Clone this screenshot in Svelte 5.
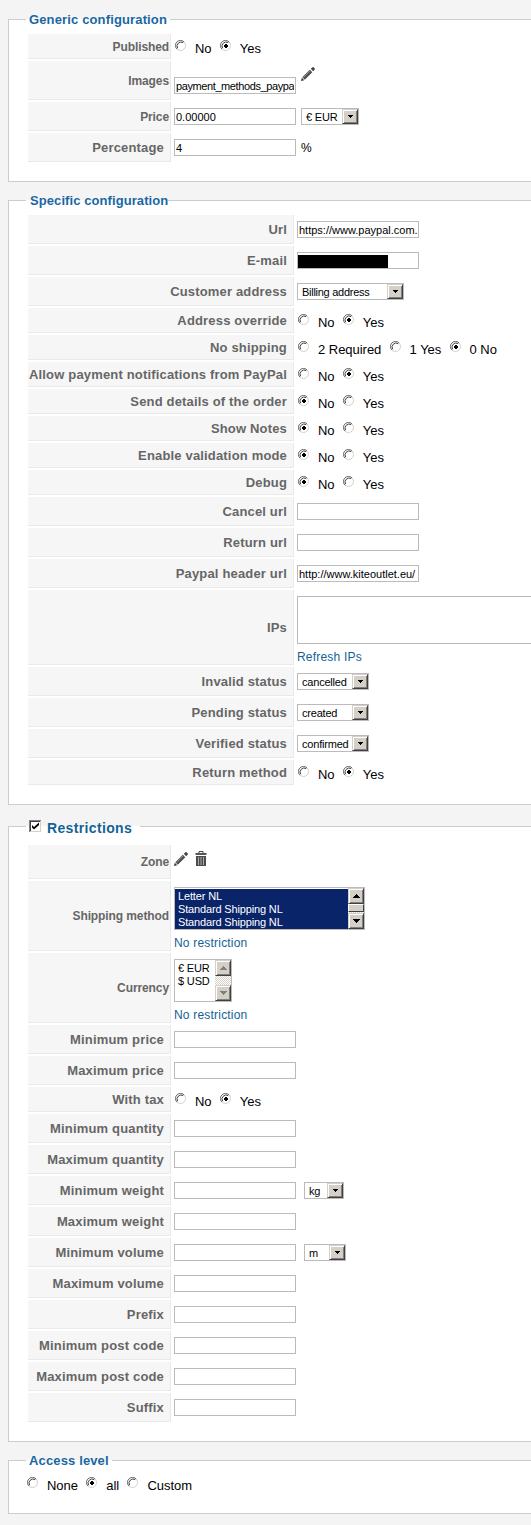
<script lang="ts">
  type Row = {
    label: string;
    kind?: 'text' | 'radio' | 'choice' | 'images' | 'ips' | 'zone' | 'shipping' | 'currency';
    value?: string;
    options?: string[];
    suffix?: string;
    unit?: string;
    unitSize?: string;
    size?: string;
    small?: boolean;
    masked?: boolean;
  };

  const yesNo = ['No', 'Yes'];

  const generic: Row[] = [
    { label: 'Published', kind: 'radio', options: yesNo, value: 'Yes', small: true },
    { label: 'Images', kind: 'images', value: 'payment_methods_paypal', small: true },
    { label: 'Price', value: '0.00000', unit: '€ EUR', unitSize: 'eur', small: true },
    { label: 'Percentage', value: '4', suffix: '%' },
  ];

  const specific: Row[] = [
    { label: 'Url', value: 'https://www.paypal.com.' },
    { label: 'E-mail', masked: true },
    { label: 'Customer address', kind: 'choice', value: 'Billing address', size: 'address' },
    { label: 'Address override', kind: 'radio', options: yesNo, value: 'Yes' },
    { label: 'No shipping', kind: 'radio', options: ['2 Required', '1 Yes', '0 No'], value: '0 No' },
    { label: 'Allow payment notifications from PayPal', kind: 'radio', options: yesNo, value: 'Yes' },
    { label: 'Send details of the order', kind: 'radio', options: yesNo, value: 'No' },
    { label: 'Show Notes', kind: 'radio', options: yesNo, value: 'No' },
    { label: 'Enable validation mode', kind: 'radio', options: yesNo, value: 'No' },
    { label: 'Debug', kind: 'radio', options: yesNo, value: 'No' },
    { label: 'Cancel url' },
    { label: 'Return url' },
    { label: 'Paypal header url', value: 'http://www.kiteoutlet.eu/' },
    { label: 'IPs', kind: 'ips' },
    { label: 'Invalid status', kind: 'choice', value: 'cancelled', size: 'status' },
    { label: 'Pending status', kind: 'choice', value: 'created', size: 'status' },
    { label: 'Verified status', kind: 'choice', value: 'confirmed', size: 'status' },
    { label: 'Return method', kind: 'radio', options: yesNo, value: 'Yes' },
  ];

  const restrictions: Row[] = [
    { label: 'Zone', kind: 'zone', small: true },
    { label: 'Shipping method', kind: 'shipping', small: true },
    { label: 'Currency', kind: 'currency', small: true },
    { label: 'Minimum price' },
    { label: 'Maximum price' },
    { label: 'With tax', kind: 'radio', options: yesNo, value: 'Yes' },
    { label: 'Minimum quantity' },
    { label: 'Maximum quantity' },
    { label: 'Minimum weight', unit: 'kg', unitSize: 'kg' },
    { label: 'Maximum weight' },
    { label: 'Minimum volume', unit: 'm', unitSize: 'm' },
    { label: 'Maximum volume' },
    { label: 'Prefix' },
    { label: 'Minimum post code' },
    { label: 'Maximum post code' },
    { label: 'Suffix' },
  ];
</script>

{#snippet radios(options: string[], value: string)}
  <div class="radios">
    {#each options as option}
      <span class="option">
        <svg width="12" height="12" viewBox="0 0 12 12">
          <circle cx="5.5" cy="5.5" r="5" fill="#fff" stroke="#d4d0c8" />
          <path d="M1.9 9.1A5 5 0 0 1 9.1 1.9" fill="none" stroke="#707070" />
          <path d="M2.6 8.2A4.1 4.1 0 0 1 8.2 2.6" fill="none" stroke="#404040" />
          {#if option === value}<path d="M5 4h2v1h1v2H7v1H5V7H4V5h1z" fill="#000" />{/if}
        </svg>
        <span>{option}</span>
      </span>
    {/each}
  </div>
{/snippet}

{#snippet dropdown(value: string, size: string)}
  <span class="select {size}">
    <span class="value">{value}</span>
    <span class="btn"><svg width="5" height="3" viewBox="0 0 5 3"><path d="M0 0h5v1H4v1H3v1H2V2H1V1H0z" /></svg></span>
  </span>
{/snippet}

{#snippet pencil()}
  <svg class="pencil" width="14" height="14" viewBox="0 0 14 14">
    <path d="M0 14l.8-3.2 2.4 2.4z" fill="#333" />
    <path d="M1.3 10.2L8.8 2.7l2.5 2.5-7.5 7.5z" fill="#505050" />
    <path d="M2.6 10.4L9.6 3.4" stroke="#8c8c8c" />
    <path d="M9.8 1.8L11.4.3h1.3l1 1v1.3l-1.5 1.6z" fill="#444" />
  </svg>
{/snippet}

{#snippet scrollbar(thumb: boolean)}
  <span class="scrollbar" class:disabled={!thumb}>
    <span class="btn"><svg width="7" height="4" viewBox="0 0 7 4"><path d="M3 0h1v1h1v1h1v1h1v1H0V3h1V2h1V1h1z" /></svg></span>
    <span class="track">{#if thumb}<span class="thumb"></span>{/if}</span>
    <span class="btn"><svg width="7" height="4" viewBox="0 0 7 4"><path d="M0 0h7v1H6v1H5v1H4v1H3V3H2V2H1V1H0z" /></svg></span>
  </span>
{/snippet}

{#snippet table(rows: Row[])}
  {#each rows as row}
    {@const kind = row.kind ?? 'text'}
    <div class="row {kind}">
      <div class="key" class:small={row.small}>{row.label}</div>
      <div class="cell">
        {#if kind === 'radio'}
          {@render radios(row.options ?? [], row.value ?? '')}
        {:else if kind === 'choice'}
          {@render dropdown(row.value ?? '', row.size ?? '')}
        {:else if kind === 'images'}
          <input type="text" value={row.value} />
          {@render pencil()}
        {:else if kind === 'ips'}
          <textarea></textarea>
          <a href="#ips">Refresh IPs</a>
        {:else if kind === 'zone'}
          {@render pencil()}
          <svg class="trash" width="12" height="15" viewBox="0 0 12 15">
            <path d="M4 2V.5h4V2" fill="none" stroke="#444" />
            <path d="M.5 2h11v2H.5z" fill="#555" />
            <path d="M1 5h10v10H1z" fill="#4c4c4c" />
            <path d="M3.5 6v8M6 6v8M8.5 6v8" stroke="#aaa" />
          </svg>
        {:else if kind === 'shipping'}
          <div class="list wide">
            <div class="options">
              <div>Letter NL</div>
              <div>Standard Shipping NL</div>
              <div>Standard Shipping NL</div>
            </div>
            {@render scrollbar(true)}
          </div>
          <a href="#shipping">No restriction</a>
        {:else if kind === 'currency'}
          <div class="list">
            <div class="options">
              <div>€ EUR</div>
              <div>$ USD</div>
            </div>
            {@render scrollbar(false)}
          </div>
          <a href="#currency">No restriction</a>
        {:else if row.masked}
          <div class="masked"><span></span></div>
        {:else}
          <input type="text" value={row.value ?? ''} />
          {#if row.unit}{@render dropdown(row.unit, row.unitSize ?? '')}{/if}
          {#if row.suffix}<span class="suffix">{row.suffix}</span>{/if}
        {/if}
      </div>
    </div>
  {/each}
{/snippet}

<div class="page">
  <fieldset>
    <legend>Generic configuration</legend>
    {@render table(generic)}
  </fieldset>

  <fieldset class="specific">
    <legend>Specific configuration</legend>
    {@render table(specific)}
  </fieldset>

  <fieldset class="restrictions">
    <legend>
      <svg width="12" height="12" viewBox="0 0 12 12">
        <path d="M0 0h12v12H0z" fill="#d4d0c8" />
        <path d="M0 0h12v1H1v11H0z" fill="#808080" />
        <path d="M1 1h10v1H2v9H1z" fill="#404040" />
        <path d="M2 2h9v9H2z" fill="#fff" />
        <path d="M3 5v2.5L5 9.5 10 5V2.5L5 7z" fill="#000" />
      </svg>
      <span>Restrictions</span>
    </legend>
    {@render table(restrictions)}
  </fieldset>

  <fieldset class="access">
    <legend>Access level</legend>
    {@render radios(['None', 'all', 'Custom'], 'all')}
  </fieldset>
</div>

<style>
  :global(body) { background: #f4f4f4; }
  .page { display: flex; flex-direction: column; gap: 10px; height: 1525px; padding: 11px 0 0 8px; box-sizing: border-box; overflow: hidden; font-family: "Liberation Sans", Arial, sans-serif; font-size: 13px; color: #000; }
  fieldset { width: 560px; box-sizing: border-box; margin: 0; border: 1px solid #ccc; padding: 6px 19px 17px; background: #fff; }
  legend { height: 17px; line-height: 17px; box-sizing: border-box; margin-left: -2px; padding: 0 3px; font-weight: bold; letter-spacing: .14px; color: #1a67a3; white-space: nowrap; }
  .specific legend { padding: 0 0 0 4px; letter-spacing: .08px; }
  .restrictions { padding-top: 7px; }
  .restrictions legend { display: flex; height: 23px; line-height: 26px; width: 114px; font-size: 14px; letter-spacing: .35px; color: #146295; }
  .restrictions legend svg { margin: 5px 6px 0 0; }

  .row { display: flex; height: 29px; margin-bottom: 2px; }
  .row.radio { height: 25px; }
  .row.images { height: 39px; }
  .row.ips { height: 75px; }
  .row.zone { height: 34px; }
  .row.shipping, .row.currency { height: 70px; }
  .key { display: flex; align-items: center; justify-content: flex-end; flex: none; width: 143px; box-sizing: border-box; padding-right: 6px; background: #f6f6f6; border-right: 1px solid #e9e9e9; border-bottom: 1px solid #e9e9e9; color: #666; font-weight: bold; letter-spacing: .17px; white-space: nowrap; }
  .key.small { padding: 1px 1px 0 0; font-size: 12px; letter-spacing: -.1px; }
  .specific .key { width: 266px; }
  .cell { display: flex; align-items: center; padding-left: 3px; }

  input, textarea, .masked, .select, .list { box-sizing: border-box; border: 1px solid #bbb; background: #fff; color: #000; font: 11px "Liberation Sans", Arial, sans-serif; border-radius: 0; letter-spacing: -.15px; }
  input { width: 122px; height: 17px; margin: 0; padding: 1px 1px 0; letter-spacing: 0; }
  .images input { letter-spacing: -.4px; }
  textarea { display: block; width: 300px; height: 48px; margin: 6px 0 0; resize: none; }
  .masked { width: 122px; height: 17px; padding-top: 2px; }
  .masked span { display: block; width: 90px; height: 13px; background: #000; }
  .suffix { margin-left: 5px; font-size: 12px; }

  .radios { display: flex; gap: 8.3px; padding-left: 1px; }
  .option { display: flex; align-items: center; gap: 8px; letter-spacing: -.03px; }
  .option svg { margin-top: -3px; }
  .option span { line-height: 15px; padding-top: 2px; }
  .row .option svg { margin-top: -2px; }
  .row .option span { padding-top: 4px; }

  .select { display: inline-flex; height: 17px; }
  .select .value { flex: 1; padding-left: 4px; line-height: 16px; white-space: nowrap; }
  .btn { display: flex; align-items: center; justify-content: center; flex: none; width: 16px; height: 15px; box-sizing: border-box; background: #d4d0c8; border: 1px solid; border-color: #d4d0c8 #404040 #404040 #d4d0c8; box-shadow: inset 1px 1px #fff, inset -1px -1px #808080; }
  .select.address { width: 107px; letter-spacing: -.27px; }
  .select.status { width: 72px; letter-spacing: -.2px; }
  .select.eur { width: 58px; margin-left: 5px; }
  .select.kg { width: 40px; margin-left: 8px; }
  .select.m { width: 42px; margin-left: 8px; }

  .row.images .cell { align-items: flex-start; padding-top: 6px; }
  .row.images input { margin-top: 10px; }
  .row.images .pencil { margin-left: 5px; }
  .row.zone .cell { align-items: flex-start; gap: 7px; padding: 6px 0 0 3px; }
  .row.zone .pencil { margin-top: 1px; }

  .ips .cell, .shipping .cell, .currency .cell { display: block; }
  .list { display: flex; width: 58px; height: 43px; margin-top: 6px; }
  .list.wide { width: 191px; }
  .options { flex: 1; padding-top: 2px; line-height: 13px; }
  .options div { padding-left: 3px; white-space: nowrap; }
  .wide .options { margin-top: 1px; padding-top: 1px; background: #0a246a; color: #fff; }
  .scrollbar { display: flex; flex-direction: column; width: 16px; }
  .scrollbar .btn { height: 16px; }
  .track { flex: 1; background: repeating-conic-gradient(#d4d0c8 0 25%, #fff 0 50%) 0 0 / 2px 2px; }
  .thumb { display: block; height: 8px; box-sizing: border-box; background: #d4d0c8; border: 1px solid; border-color: #fff #404040 #404040 #fff; }
  .disabled svg { fill: #808080; }
  a { display: block; margin-top: 5px; line-height: 16px; font-size: 12px; letter-spacing: .2px; color: #146295; text-decoration: none; }

  .access { height: 62px; padding: 7px 17px 0; }
  .access legend { margin-left: 0; }
</style>
